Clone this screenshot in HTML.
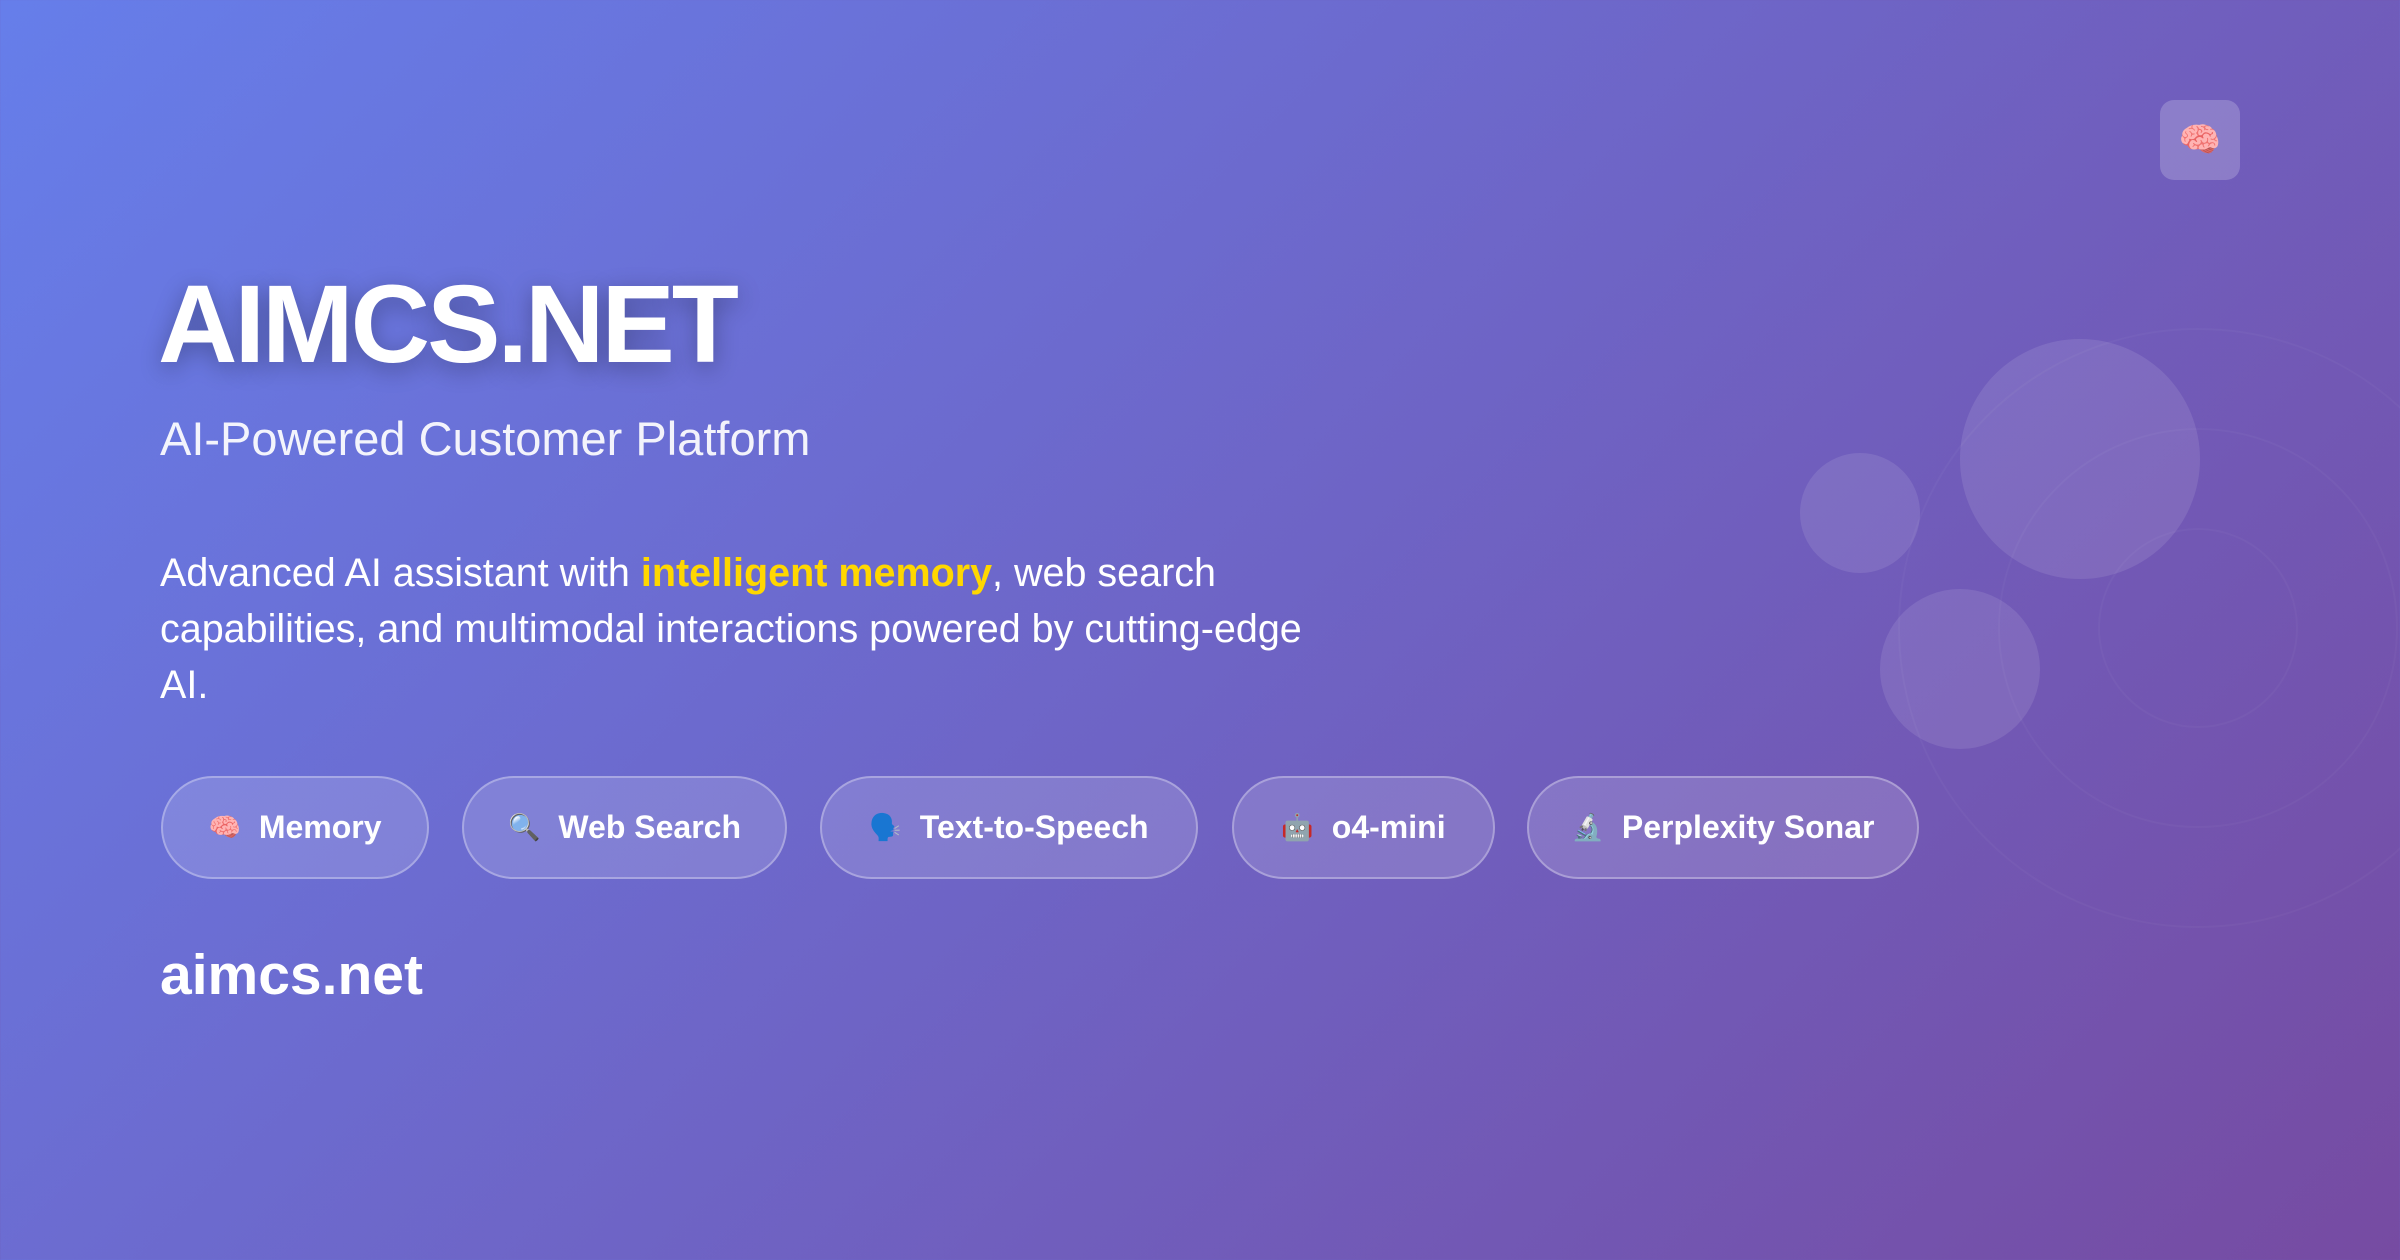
<!DOCTYPE html>
<html><head><meta charset="utf-8"><style>
*{margin:0;padding:0;box-sizing:border-box}
html,body{width:2400px;height:1260px;overflow:hidden}
body{background:linear-gradient(135deg,#667eea 0%,#764ba2 100%);font-family:"Liberation Sans","Noto Sans CJK JP",sans-serif;color:#fff;position:relative}
.abs{position:absolute}
.circ{position:absolute;border-radius:50%;background:rgba(255,255,255,0.1)}
.ring{position:absolute;border-radius:50%;border:2px solid rgba(255,255,255,0.03)}
h1{position:absolute;left:158px;top:260px;font-size:110px;font-weight:700;letter-spacing:-3px;line-height:130px;text-shadow:0 6px 24px rgba(0,0,0,0.3)}
.sub{left:160px;top:409px;font-size:47px;line-height:60px;opacity:.92}
.desc{left:160px;top:545px;font-size:39.5px;line-height:56px;white-space:nowrap}
.desc b{color:#ffd700;font-weight:700}
.pill{position:absolute;top:776px;height:103px;border-radius:52px;background:rgba(255,255,255,0.15);border:2px solid rgba(255,255,255,0.3);display:flex;align-items:center;justify-content:center;font-size:32px;font-weight:700;gap:18px}
.pill span.e{font-size:26px}
.dom{left:160px;top:940px;font-size:57px;font-weight:700;line-height:70px}
.brain{left:2160px;top:100px;width:80px;height:80px;border-radius:14px;background:rgba(255,255,255,0.2);display:flex;align-items:center;justify-content:center;font-size:34px}
</style></head><body>
<div class="ring" style="left:2098px;top:528px;width:200px;height:200px"></div>
<div class="ring" style="left:1998px;top:428px;width:400px;height:400px"></div>
<div class="ring" style="left:1898px;top:328px;width:600px;height:600px"></div>
<div class="circ" style="left:1960px;top:339px;width:240px;height:240px"></div>
<div class="circ" style="left:1800px;top:453px;width:120px;height:120px"></div>
<div class="circ" style="left:1880px;top:589px;width:160px;height:160px"></div>
<div class="abs brain">🧠</div>
<h1>AIMCS.NET</h1>
<div class="abs sub">AI-Powered Customer Platform</div>
<div class="abs desc">Advanced AI assistant with <b>intelligent memory</b>, web search<br>capabilities, and multimodal interactions powered by cutting-edge<br>AI.</div>
<div class="pill" style="left:161px;width:268px"><span class="e">🧠</span>Memory</div>
<div class="pill" style="left:462px;width:325px"><span class="e">🔍</span>Web Search</div>
<div class="pill" style="left:820px;width:378px"><span class="e">🗣️</span>Text-to-Speech</div>
<div class="pill" style="left:1232px;width:263px"><span class="e">🤖</span>o4-mini</div>
<div class="pill" style="left:1527px;width:392px"><span class="e">🔬</span>Perplexity Sonar</div>
<div class="abs dom">aimcs.net</div>
</body></html>
